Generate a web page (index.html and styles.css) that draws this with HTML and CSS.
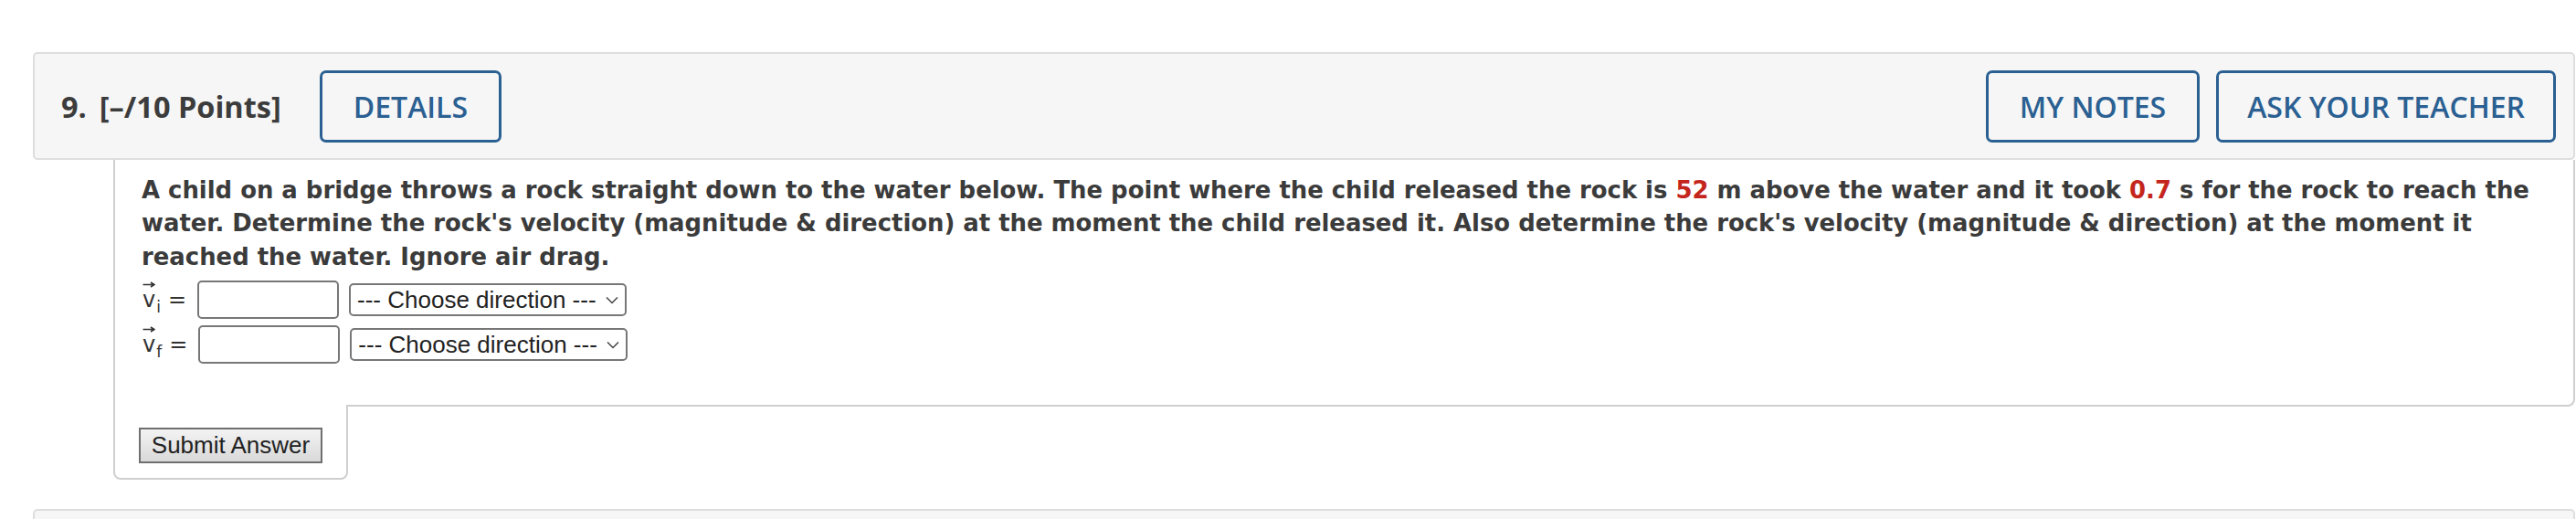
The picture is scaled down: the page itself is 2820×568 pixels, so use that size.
FILE: index.html
```html
<!DOCTYPE html>
<html lang="en">
<head>
<meta charset="utf-8">
<title>Question 9</title>
<link rel="stylesheet" href="styles.css">
</head>
<body>
<div class="page">
  <div class="q-header">
    <div class="q-title"><span class="q-num">9.</span><span class="q-points">[–/10 Points]</span></div>
    <button class="hbtn">DETAILS</button>
    <div class="spacer"></div>
    <button class="hbtn notes">MY NOTES</button>
    <button class="hbtn ask">ASK YOUR TEACHER</button>
  </div>
  <div class="q-body">
    <p class="q-text">A child on a bridge throws a rock straight down to the water below. The point where the child released the rock is <span class="red">52</span> m above the water and it took <span class="red">0.7</span> s for the rock to reach the water. Determine the rock's velocity (magnitude &amp; direction) at the moment the child released it. Also determine the rock's velocity (magnitude &amp; direction) at the moment it reached the water. Ignore air drag.</p>
    <div class="ans-row">
      <span class="lbl"><span class="vec">v<svg class="arr" width="14" height="7" viewBox="0 0 14 7"><path d="M0.5 3.5H12.5M9 1L12.8 3.5L9 6" fill="none" stroke="#333" stroke-width="1.6"/></svg></span><span class="sub">i</span></span>
      <span class="eq">=</span>
      <input class="ans-input" type="text">
      <span class="sel"><select><option>--- Choose direction ---</option></select><svg class="chev" width="14" height="9" viewBox="0 0 14 9"><path d="M1 1.5L7 7.5L13 1.5" fill="none" stroke="#444" stroke-width="1.5"/></svg></span>
    </div>
    <div class="ans-row">
      <span class="lbl"><span class="vec">v<svg class="arr" width="14" height="7" viewBox="0 0 14 7"><path d="M0.5 3.5H12.5M9 1L12.8 3.5L9 6" fill="none" stroke="#333" stroke-width="1.6"/></svg></span><span class="sub">f</span></span>
      <span class="eq">=</span>
      <input class="ans-input" type="text">
      <span class="sel"><select><option>--- Choose direction ---</option></select><svg class="chev" width="14" height="9" viewBox="0 0 14 9"><path d="M1 1.5L7 7.5L13 1.5" fill="none" stroke="#444" stroke-width="1.5"/></svg></span>
    </div>
  </div>
  <div class="submit-tab"><button class="submit">Submit Answer</button></div>
  <div class="q-header next"></div>
</div>
</body>
</html>
```

FILE: styles.css
```css
* { box-sizing: border-box; }
html, body { margin: 0; padding: 0; background: #fff; }
body {
  width: 2820px;
  height: 568px;
  overflow: hidden;
  font-family: "DejaVu Sans", Verdana, sans-serif;
  color: #3b3b3b;
}
.page { padding: 57px 1px 0 36px; }

.q-header {
  display: flex;
  align-items: center;
  height: 118px;
  background: #f6f6f6;
  border: 2px solid #dedede;
  border-radius: 5px;
  padding: 0 19px 0 29px;
}
.q-title {
  font-family: "Open Sans", sans-serif;
  font-weight: 700;
  font-size: 32.5px;
  color: #3c3c3c;
  margin-right: 42px;
  white-space: nowrap;
}
.q-num { margin-right: 14px; }
.hbtn {
  font-family: "Open Sans", sans-serif;
  font-weight: 600;
  font-size: 32px;
  color: #2b6092;
  background: transparent;
  border: 3px solid #2b6092;
  border-radius: 7px;
  height: 79px;
  padding: 0 34px;
  white-space: nowrap;
}
.hbtn.ask { padding: 0 31px; }
.spacer { flex: 1; }
.notes { margin-right: 18px; }

.q-body {
  margin-left: 88px;
  border: 2px solid #cfcfcf;
  border-top: none;
  border-bottom-right-radius: 8px;
  padding: 15px 35px 45px 29px;
}
.q-text {
  margin: 0 0 8px;
  font-weight: 700;
  font-size: 25.9px;
  line-height: 36.4px;
}
.red { color: #c4261d; }

.ans-row {
  display: flex;
  align-items: center;
  height: 42px;
  margin-bottom: 7px;
  font-size: 24px;
  color: #333;
}
.ans-row:last-child { margin-bottom: 0; }
.lbl { margin-left: 1px; white-space: nowrap; }
.vec { position: relative; display: inline-block; }
.arr { position: absolute; left: 0; top: -6px; }
.sub { font-size: 17px; position: relative; top: 6px; margin-left: 1px; }
.eq { margin: 0 12px 0 8px; }
.ans-input {
  width: 155px;
  height: 42px;
  border: 2px solid #777;
  border-radius: 5px;
  background: #fff;
  margin: 0 11px 0 0;
}
.sel { position: relative; display: inline-block; }
.sel select {
  appearance: none;
  -webkit-appearance: none;
  width: 304px;
  height: 36px;
  border: 2px solid #777;
  border-radius: 5px;
  background: #fff;
  padding: 0 0 0 7px;
  font-family: "Liberation Sans", Arial, sans-serif;
  font-size: 26px;
  color: #222;
}
.chev { position: absolute; right: 9px; top: 14px; pointer-events: none; }

.submit-tab {
  position: relative;
  width: 257px;
  margin: -2px 0 0 88px;
  background: #fff;
  border: 2px solid #cfcfcf;
  border-top: none;
  border-radius: 0 0 8px 8px;
  padding: 25px 0 16px 26px;
}
.submit {
  display: block;
  width: 201px;
  height: 39px;
  border: 2px solid #6f6f6f;
  border-radius: 0;
  background: linear-gradient(#f3f3f3, #d9d9d9);
  font-family: "Liberation Sans", Arial, sans-serif;
  font-size: 26px;
  color: #222;
  padding: 0;
}
.q-header.next { margin-top: 32px; }
```
